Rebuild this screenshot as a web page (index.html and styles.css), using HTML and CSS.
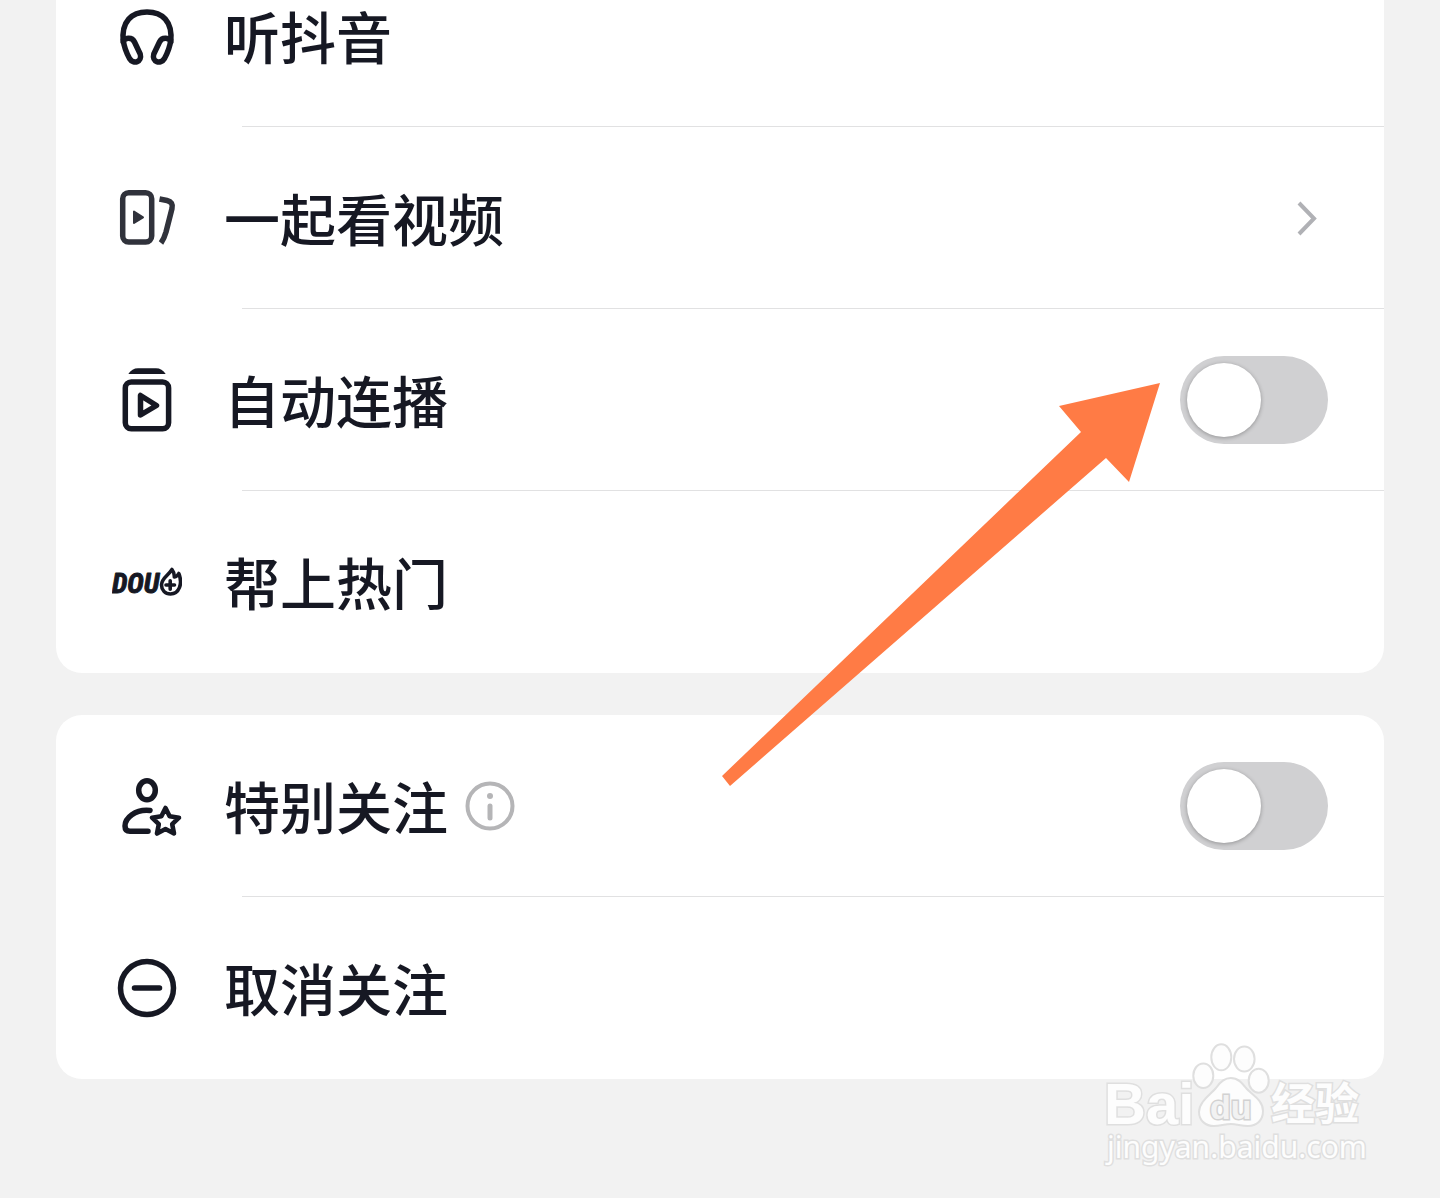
FILE: index.html
```html
<!DOCTYPE html>
<html lang="zh-CN">
  <head>
    <meta charset="UTF-8" />
    <meta name="viewport" content="width=device-width, initial-scale=1.0" />
    <title>抖音</title>
    <link rel="stylesheet" href="styles.css">
  </head>
  <body>
    <main class="page">
      <ul class="card card-top">
        <li>
          <button class="row" type="button">
            <svg class="icon" viewBox="0 0 70 70">
              <path d="M11.300 41C9 20 20 11 35 11S61 20 58.700 41" />
              <path d="M11.300 41C12 36.500 20 35.500 22.500 41L28.200 53C30.500 61 21.500 64 17.500 57.500C14 51 12 46 11.300 39" />
              <path d="M58.700 41C58 36.500 50 35.500 47.500 41L41.800 53C39.500 61 48.500 64 52.500 57.500C56 51 58 46 58.700 39" />
            </svg>
            <span class="label">听抖音</span>
          </button>
        </li>
        <li>
          <button class="row" type="button">
            <svg class="icon icon-soft" viewBox="0 0 70 70">
              <rect x="10.700" y="9.700" width="29" height="49.300" rx="6" />
              <path class="solid" d="M22 28.500V40L31 34.300Z" />
              <path d="M47.500 16L55 17.500Q61.500 19 60 25.500L54 49Q52 56 49 60" />
            </svg>
            <span class="label">一起看视频</span>
            <svg class="chevron" viewBox="0 0 42 42">
              <path d="M13 6L28 21.500L13 37" />
            </svg>
          </button>
        </li>
        <li>
          <div class="row">
            <svg class="icon" viewBox="0 0 70 70">
              <path class="fill" d="M16.300 9Q20 3.300 26 3.300H44Q50 3.300 53.700 9Z" />
              <rect x="13.300" y="17" width="43.300" height="46.700" rx="6" />
              <path d="M28.500 30.500V50L44.500 40.500Z" />
            </svg>
            <label class="label" for="autoplay">自动连播</label>
            <input class="switch" id="autoplay" type="checkbox" />
          </div>
        </li>
        <li>
          <button class="row" type="button">
            <svg class="icon" viewBox="0 0 70 70">
              <text class="dou" x="0" y="46">DOU</text>
              <g class="flame">
                <path d="M49.500 38C49.500 31 56 29 60 22.500C62 25 62.500 27 62.300 30C65 29.500 66 28 66.800 26.500C71 37 67 47 58.500 47C53 47 49.500 43 49.500 38Z" />
                <path d="M54 38H62.500M58.200 33.800V42.200" />
              </g>
            </svg>
            <span class="label">帮上热门</span>
          </button>
        </li>
      </ul>

      <ul class="card">
        <li>
          <div class="row">
            <svg class="icon" viewBox="0 0 70 70">
              <ellipse cx="35" cy="19.300" rx="8.300" ry="9.500" />
              <path d="M38 39.500C23 38 13 47 13 55Q13 60.300 18 60.300H36" />
              <path class="star" d="M53.500 37L57.600 45.300L67 46.700L60.200 53.200L62 62.500L53.500 58L45 62.500L46.800 53.200L40 46.700L49.400 45.300Z" />
            </svg>
            <label class="label" for="special">特别关注</label>
            <button class="info" type="button" aria-label="说明">
              <svg viewBox="0 0 50 50">
                <circle cx="25" cy="25" r="22.500" />
                <path d="M25 25V37" />
                <circle class="dot" cx="25" cy="15" r="3" />
              </svg>
            </button>
            <input class="switch" id="special" type="checkbox" />
          </div>
        </li>
        <li>
          <button class="row" type="button">
            <svg class="icon" viewBox="0 0 70 70">
              <circle cx="35" cy="35" r="26.500" />
              <path d="M22.500 35H47.500" />
            </svg>
            <span class="label">取消关注</span>
          </button>
        </li>
      </ul>

      <!-- pointer to the autoplay switch -->
      <svg class="arrow" viewBox="0 0 438 403">
        <path d="M438 0L337 23L359 49L0 393L8 403L384 75L407 99Z" />
      </svg>

      <svg class="watermark" viewBox="0 0 270 134">
        <ellipse cx="103.300" cy="35.700" rx="10" ry="12.300" />
        <ellipse cx="121.300" cy="17.300" rx="10" ry="13" />
        <ellipse cx="144.300" cy="19" rx="10.300" ry="12.500" />
        <ellipse cx="158.700" cy="40.700" rx="10" ry="12" />
        <path d="M130.700 38C138 38 142 43 146 48C152 55 163 60 163 71C163 81 156 86 148 86C141 86 137 84 131 84S120 86 114 86C106 86 99 81 99 72C99 62 110 55 116 48C120 42 124 38 130.700 38Z" />
        <text class="wm-bai" x="4" y="84">Bai</text>
        <text class="wm-du" x="110" y="79">du</text>
        <text class="wm-cn" x="171" y="80">经验</text>
        <text class="wm-url" x="7" y="118">jingyan.baidu.com</text>
      </svg>
    </main>
  </body>
</html>
```
FILE: styles.css
```css
body {
  margin: 0;
  background-color: #f2f2f2;
  color: #161823;
  font-family: "Noto Sans CJK SC", sans-serif;
}

.page {
  position: relative;
  box-sizing: border-box;
  min-height: 100vh;
  padding: 0 56px;
  overflow: hidden;
}

.card {
  list-style: none;
  margin: 0 0 42px;
  padding: 0;
  background-color: white;
  border-radius: 26px;
}

/* the list is scrolled, first row is partly above the window */
.card-top {
  margin-top: -55px;
}

.card li:not(:last-child)::after {
  content: "";
  display: block;
  height: 1px;
  margin-left: 186px;
  background-color: #e1e1e2;
}

.row {
  display: flex;
  align-items: center;
  box-sizing: border-box;
  width: 100%;
  height: 181px;
  padding: 0 56px;
  border: none;
  background: none;
  color: inherit;
  font: inherit;
  text-align: left;
}

li:last-child .row {
  height: 182px;
}

.icon {
  flex: none;
  width: 70px;
  height: 70px;
  margin-right: 42px;
  fill: none;
  stroke: #161823;
  stroke-width: 5.5;
  stroke-linecap: round;
  stroke-linejoin: round;
}

.icon-soft {
  stroke: #30323b;
  stroke-linecap: butt;
}

.icon .solid {
  fill: #30323b;
  stroke-width: 2;
}

.icon .fill {
  fill: #161823;
  stroke: none;
}

.icon .star {
  stroke-width: 4.6;
}

.icon .flame {
  fill: white;
  stroke-width: 3.6;
}

.icon .dou {
  fill: #161823;
  stroke: #161823;
  stroke-width: 1;
  font: italic bold 28px "Roboto Condensed", "Open Sans Condensed", "Noto Sans CJK SC", sans-serif;
}

.label {
  padding-bottom: 2px;
  font-size: 56px;
  font-weight: 500;
  line-height: 64px;
}

.chevron {
  width: 42px;
  height: 42px;
  margin-left: auto;
  fill: none;
  stroke: #b0b1b5;
  stroke-width: 4;
}

.info {
  width: 50px;
  height: 50px;
  margin-left: 17px;
  padding: 0;
  border: none;
  background: none;
}

.info svg {
  display: block;
  fill: none;
  stroke: #b5b5b7;
  stroke-width: 4;
  stroke-linecap: round;
}

.info path {
  stroke-width: 5;
}

.info .dot {
  fill: #b5b5b7;
  stroke: none;
}

.switch {
  appearance: none;
  flex: none;
  box-sizing: border-box;
  width: 148px;
  height: 88px;
  margin: 0 0 0 auto;
  padding: 7px;
  border-radius: 44px;
  background-color: #d0d0d2;
}

.switch::before {
  content: "";
  display: block;
  width: 74px;
  height: 74px;
  border-radius: 50%;
  background-color: white;
  box-shadow: 0 1px 4px rgba(0, 0, 0, 0.3);
}

.switch:checked {
  background-color: #20d5ec;
}

.switch:checked::before {
  margin-left: auto;
}

.arrow {
  position: absolute;
  top: 383px;
  right: 280px;
  width: 438px;
  height: 403px;
  fill: #ff7b45;
  pointer-events: none;
}

.watermark {
  position: absolute;
  right: 70px;
  bottom: 24px;
  width: 270px;
  height: 134px;
  fill: #fdfdfd;
  stroke: #dfdfdf;
  stroke-width: 2;
  pointer-events: none;
}

.watermark text {
  paint-order: stroke;
  stroke-width: 3;
}

.wm-bai {
  font: bold 58px "Liberation Sans", sans-serif;
}

.watermark .wm-du {
  font: bold 34px "Liberation Sans", sans-serif;
  fill: #f2f2f2;
  stroke: #d2d2d2;
}

.wm-cn {
  font: bold 44px "Noto Sans CJK SC", sans-serif;
}

.wm-url {
  font: 30px "Noto Sans", sans-serif;
}
```
